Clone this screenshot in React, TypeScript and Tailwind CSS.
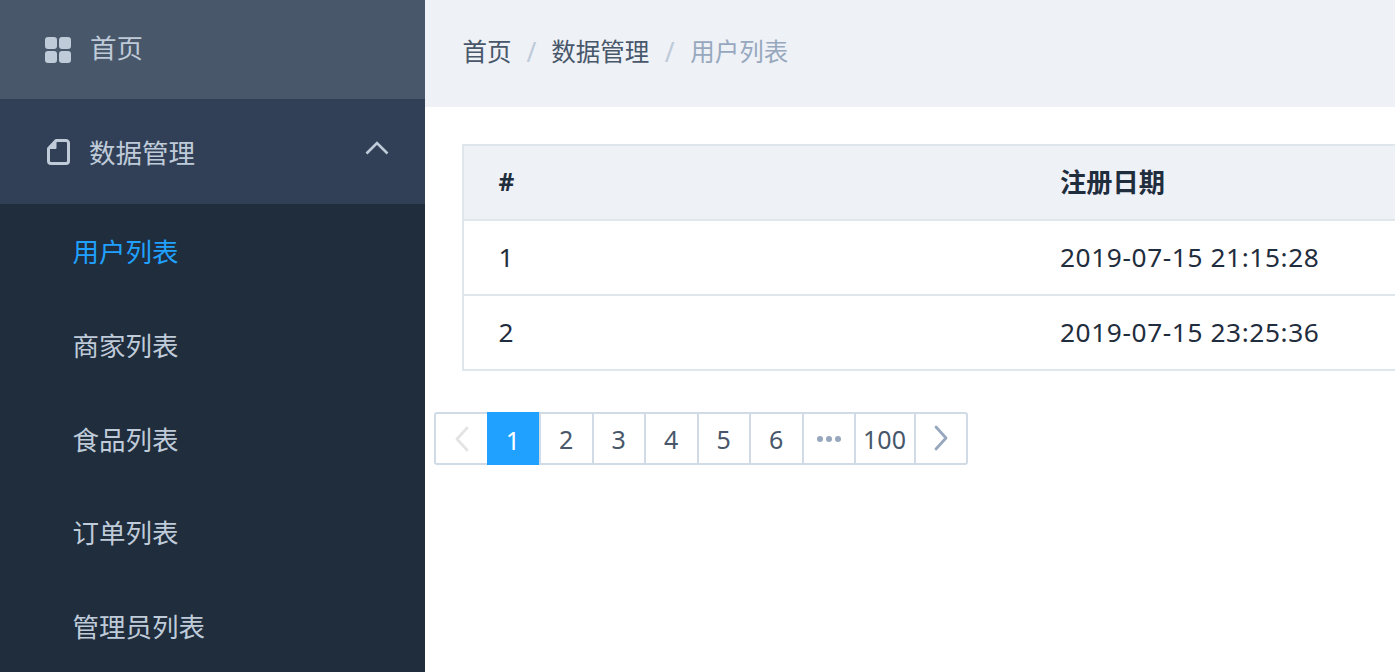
const font = "font-['Noto_Sans','Noto_Sans_CJK_SC',sans-serif]";

const subMenu = ["用户列表", "商家列表", "食品列表", "订单列表", "管理员列表"];
const rows = [
  { id: 1, date: "2019-07-15 21:15:28" },
  { id: 2, date: "2019-07-15 23:25:36" },
];
const pages = ["2", "3", "4", "5", "6"];

function HomeIcon() {
  return (
    <svg width="26" height="26" viewBox="0 0 26 26" className="fill-[#bfcbd9]">
      <rect x="0" y="0" width="12" height="12" rx="3" />
      <rect x="14" y="0" width="12" height="12" rx="3" />
      <rect x="0" y="14" width="12" height="12" rx="3" />
      <rect x="14" y="14" width="12" height="12" rx="3" />
    </svg>
  );
}

function DocIcon() {
  return (
    <svg width="23" height="26" viewBox="0 0 23 26" fill="none" className="stroke-[#bfcbd9]" strokeWidth="3">
      <path d="M9 1.5H19a2.5 2.5 0 0 1 2.5 2.5V22a2.5 2.5 0 0 1-2.5 2.5H4A2.5 2.5 0 0 1 1.5 22V9.5Z" strokeLinejoin="round" />
      <path d="M9 1.5V9.5H1.5Z" className="fill-[#bfcbd9]" strokeWidth="1" />
    </svg>
  );
}

function Chevron({ dir }: { dir: "left" | "right" }) {
  return (
    <svg width="14" height="26" viewBox="0 0 14 26" fill="none" stroke="currentColor" strokeWidth="2.8" strokeLinecap="round" strokeLinejoin="round">
      <path d={dir === "left" ? "M12 2 2 13l10 11" : "M2 2l10 11L2 24"} />
    </svg>
  );
}

function Sidebar() {
  return (
    <aside className="w-[425px] shrink-0 h-full bg-[#1f2d3d] text-[26.5px] text-[#bfcbd9] overflow-hidden">
      <div className="h-[99px] bg-[#48576a] flex items-center pl-[45px] gap-[19px]">
        <HomeIcon />
        <span className="-mt-[1px]">首页</span>
      </div>
      <div className="h-[105px] bg-[#324057] flex items-center pl-[47px] pr-[36px]">
        <DocIcon />
        <span className="ml-[19px] mt-[4px]">数据管理</span>
        <svg width="24" height="14" viewBox="0 0 24 14" fill="none" className="ml-auto mb-[7px] stroke-[#bfcbd9]" strokeWidth="2.6">
          <path d="M1.5 12.5 12 2l10.5 10.5" />
        </svg>
      </div>
      <div className="pt-[2px]">
        {subMenu.map((name, i) => (
          <div key={name} className={`h-[93.8px] flex items-center pl-[72.5px] ${i === 0 ? "text-[#20a0ff]" : ""}`}>
            {name}
          </div>
        ))}
      </div>
    </aside>
  );
}

function Breadcrumb() {
  return (
    <div className="h-[107px] bg-[#eef1f6] flex items-center pl-[37.5px] pb-[2px] text-[24.5px] text-[#48576a]">
      <span>首页</span>
      <span className="mx-[15px] text-[26.5px] text-[#bfcbd9]">/</span>
      <span>数据管理</span>
      <span className="mx-[15.5px] text-[26.5px] text-[#bfcbd9]">/</span>
      <span className="text-[#97a8be]">用户列表</span>
    </div>
  );
}

function UserTable() {
  return (
    <div className="ml-[37px] mt-[37px] w-[1600px] border-2 border-[#dfe6ec] text-[#1f2d3d] text-[26.25px]">
      <div className="h-[73px] bg-[#eef1f6] flex items-center font-bold">
        <div className="w-[597px] pl-[34.5px] text-[24.5px]">#</div>
        <div className="-ml-[1px]">注册日期</div>
      </div>
      {rows.map((r) => (
        <div key={r.id} className="h-[75px] border-t-2 border-[#dfe6ec] flex items-center">
          <div className="w-[597px] pl-[34.5px]">{r.id}</div>
          <div className="-ml-[1px] tracking-[0.6px]">{r.date}</div>
        </div>
      ))}
    </div>
  );
}

function Pagination() {
  const cell = "h-full flex items-center justify-center border-l-2 border-[#d1dbe5]";
  return (
    <div className="ml-[9px] mt-[41px] h-[53px] flex w-fit border-2 border-[#d1dbe5] rounded-[3px] text-[25px] text-[#48576a] bg-white">
      <div className="w-[51px] h-full flex items-center justify-center text-[#e4e4e4]">
        <Chevron dir="left" />
      </div>
      <div className="w-[52px] h-[53px] -mt-[2px] flex items-center justify-center bg-[#20a0ff] text-white">
        <span className="mt-[4px]">1</span>
      </div>
      {pages.map((p, i) => (
        <div key={p} className={`w-[52.5px] pt-[3px] ${cell} ${i === 0 ? "border-l-0" : ""}`}>
          {p}
        </div>
      ))}
      <div className={`w-[52px] ${cell} gap-[3px]`}>
        <span className="size-[6px] rounded-full bg-[#97a8be]" />
        <span className="size-[6px] rounded-full bg-[#97a8be]" />
        <span className="size-[6px] rounded-full bg-[#97a8be]" />
      </div>
      <div className={`w-[60px] pt-[3px] ${cell}`}>100</div>
      <div className={`w-[52px] pb-[2px] ${cell} text-[#97a8be]`}>
        <Chevron dir="right" />
      </div>
    </div>
  );
}

export default function App() {
  return (
    <div className={`w-[1395px] h-[672px] flex overflow-hidden bg-white ${font}`}>
      <Sidebar />
      <main className="flex-1 min-w-0 overflow-hidden">
        <Breadcrumb />
        <UserTable />
        <Pagination />
      </main>
    </div>
  );
}
